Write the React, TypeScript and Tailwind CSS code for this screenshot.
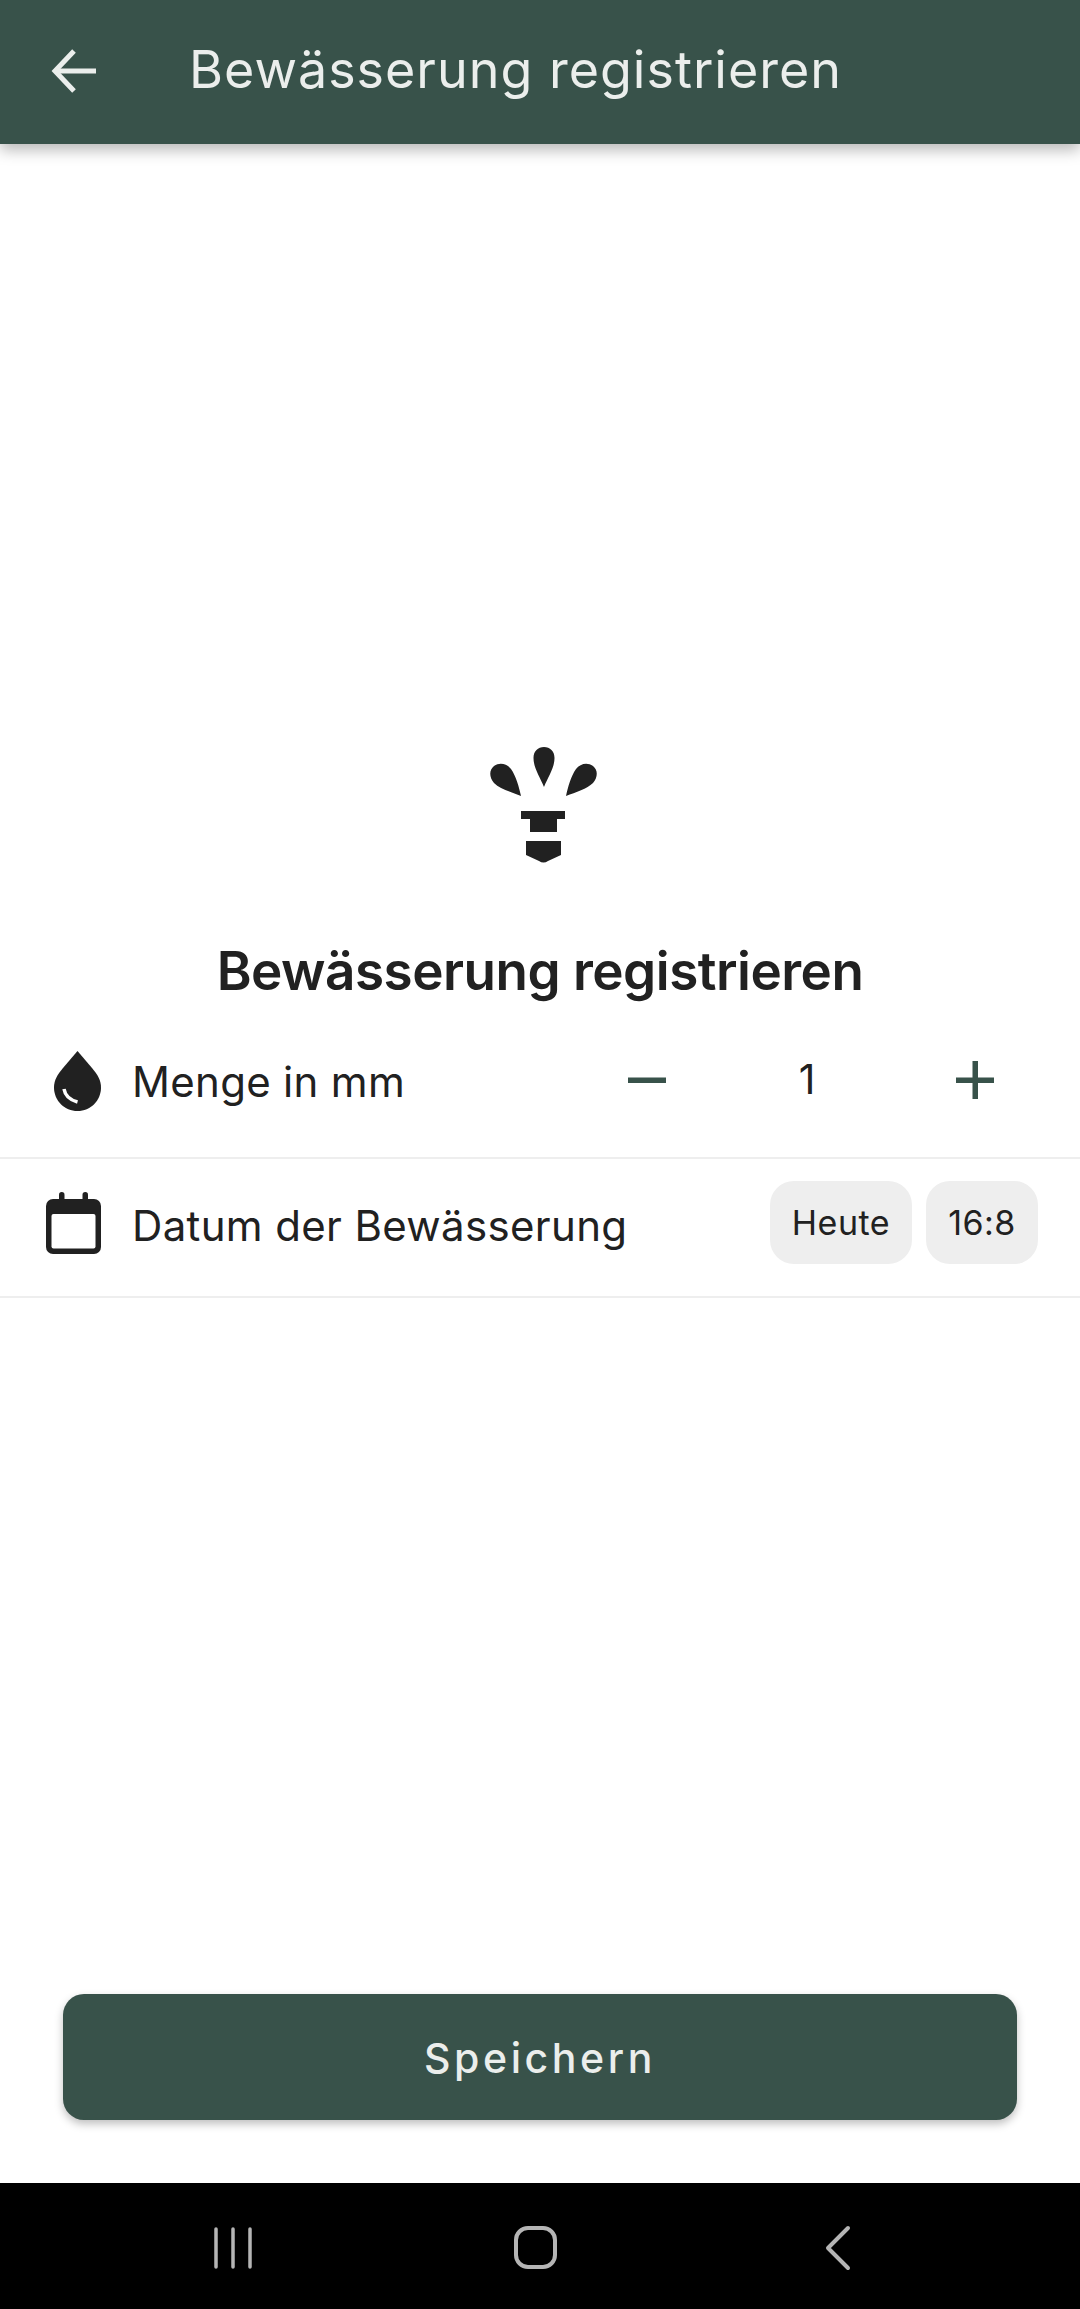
import { useState } from "react";

const font = "font-['Inter',sans-serif]";

function Sprinkler() {
  return (
    <svg width="108" height="118" viewBox="0 0 108 118" className="block fill-[#212121]">
      <path d="M54 40 C50 30 43.5 21 43.5 11 C43.5 4 48 0 54 0 C60 0 64.5 4 64.5 11 C64.5 21 58 30 54 40 Z" />
      <path d="M31 49 C21 45 10 42 4 36 C-1 30 -1 23 4 19 C10 15 17 17 21 22 C26 29 29 40 31 49 Z" />
      <path d="M76 49 C86 45 97 42 103 36 C108 30 108 23 103 19 C97 15 90 17 86 22 C81 29 78 40 76 49 Z" />
      <path d="M31 64 H75 V72 H67 V85 H40 V72 H31 Z" />
      <path d="M36 94 H71 V108 L58 114 C55 116 52 116 49 114 L36 108 Z" />
    </svg>
  );
}

function Drop() {
  return (
    <svg width="47" height="60" viewBox="0 0 47 60" className="block">
      <path
        d="M23.5 0 L38 17 C43.5 23.5 47 29 47 36.5 C47 49.5 36.5 60 23.5 60 C10.5 60 0 49.5 0 36.5 C0 29 3.5 23.5 9 17 Z"
        fill="#212121"
      />
      <path d="M10 38 C11 44 16 49 23.5 51" fill="none" stroke="#fff" strokeWidth="3.5" />
    </svg>
  );
}

function Calendar() {
  return (
    <svg width="55" height="62" viewBox="0 0 55 62" className="block">
      <rect x="13" y="0" width="5.5" height="12" rx="2.7" fill="#212121" />
      <rect x="36.5" y="0" width="5.5" height="12" rx="2.7" fill="#212121" />
      <rect x="0" y="7" width="55" height="55" rx="7" fill="#212121" />
      <rect x="5.5" y="22" width="44" height="34.5" rx="2" fill="#fff" />
    </svg>
  );
}

export default function App() {
  const [amount, setAmount] = useState(1);

  return (
    <div className={`flex h-[2309px] w-[1080px] flex-col bg-white ${font} text-[#212121]`}>
      {/* App bar */}
      <header className="z-10 flex h-[144px] shrink-0 items-center bg-[#38524a] pl-[51px] shadow-[0_6px_14px_rgba(0,0,0,0.28)]">
        <svg width="46" height="46" viewBox="0 0 46 46" fill="none" stroke="#ebeeec" strokeWidth="5" className="-mt-[2px]">
          <path d="M45 23 H5" />
          <path d="M23 3 L4 23 L23 43" />
        </svg>
        <h1 className="ml-[92px] -mt-[4px] text-[52px] leading-none font-normal tracking-[1px] text-[#ebeeec]">Bewässerung registrieren</h1>
      </header>

      <main className="flex flex-1 flex-col">
        <div className="flex justify-center pt-[603px] pl-[8px]">
          <Sprinkler />
        </div>
        <h2 className="mt-[76px] text-center text-[53px] leading-[60px] font-[560] tracking-[-0.5px]">Bewässerung registrieren</h2>

        {/* Menge */}
        <div className="flex h-[158px] items-center border-b-2 border-[#eeeeee] pt-[2px]">
          <div className="ml-[54px] mt-[2px] w-[78px]">
            <Drop />
          </div>
          <span className="mt-[4px] text-[42px] leading-none tracking-[0.3px]">Menge in mm</span>
          <div className="ml-auto mr-[86px] flex items-center">
            <button onClick={() => setAmount(amount - 1)} className="h-[38px] w-[38px]">
              <svg width="38" height="38" viewBox="0 0 38 38" fill="#38524a">
                <rect x="0" y="16.5" width="38" height="5.5" />
              </svg>
            </button>
            <span className="-mt-[2px] w-[290px] pr-[8px] text-center text-[41px] leading-none">{amount}</span>
            <button onClick={() => setAmount(amount + 1)} className="h-[38px] w-[38px]">
              <svg width="38" height="38" viewBox="0 0 38 38" fill="#38524a">
                <rect x="0" y="16.5" width="38" height="5.5" />
                <rect x="16.5" y="0" width="5.5" height="38" />
              </svg>
            </button>
          </div>
        </div>

        {/* Datum */}
        <div className="flex h-[139px] items-center border-b-2 border-[#eeeeee] pb-[10px]">
          <div className="ml-[46px] w-[86px]">
            <Calendar />
          </div>
          <span className="mt-[6px] text-[42px] leading-none tracking-[0.35px]">Datum der Bewässerung</span>
          <div className="ml-auto mr-[42px] flex gap-[14px]">
            <button className="flex h-[83px] w-[142px] items-center justify-center rounded-[24px] bg-[#eeeeee] text-[34px] leading-none tracking-[0.5px]">
              Heute
            </button>
            <button className="flex h-[83px] w-[112px] items-center justify-center rounded-[24px] bg-[#eeeeee] text-[34px] leading-none tracking-[0.5px]">
              16:8
            </button>
          </div>
        </div>

        <div className="mt-auto px-[63px] pb-[63px]">
          <button className="flex h-[126px] w-full items-center justify-center rounded-[21px] bg-[#38524a] pt-[2px] text-[41px] leading-none font-medium tracking-[3.6px] text-[#ebeeec] shadow-[0_4px_8px_rgba(0,0,0,0.25)]">
            Speichern
          </button>
        </div>
      </main>

      {/* Android nav bar */}
      <nav className="flex h-[126px] shrink-0 items-center bg-black">
        <svg width="1080" height="126" viewBox="0 0 1080 126" fill="none" stroke="#b5b5b5" strokeLinecap="round">
          <path d="M216 46 V84 M233 46 V84 M250 46 V84" strokeWidth="3.5" />
          <rect x="516" y="45" width="39" height="39" rx="12" strokeWidth="4" />
          <path d="M848 45 L828 65 L848 85" strokeWidth="4" strokeLinejoin="round" />
        </svg>
      </nav>
    </div>
  );
}
